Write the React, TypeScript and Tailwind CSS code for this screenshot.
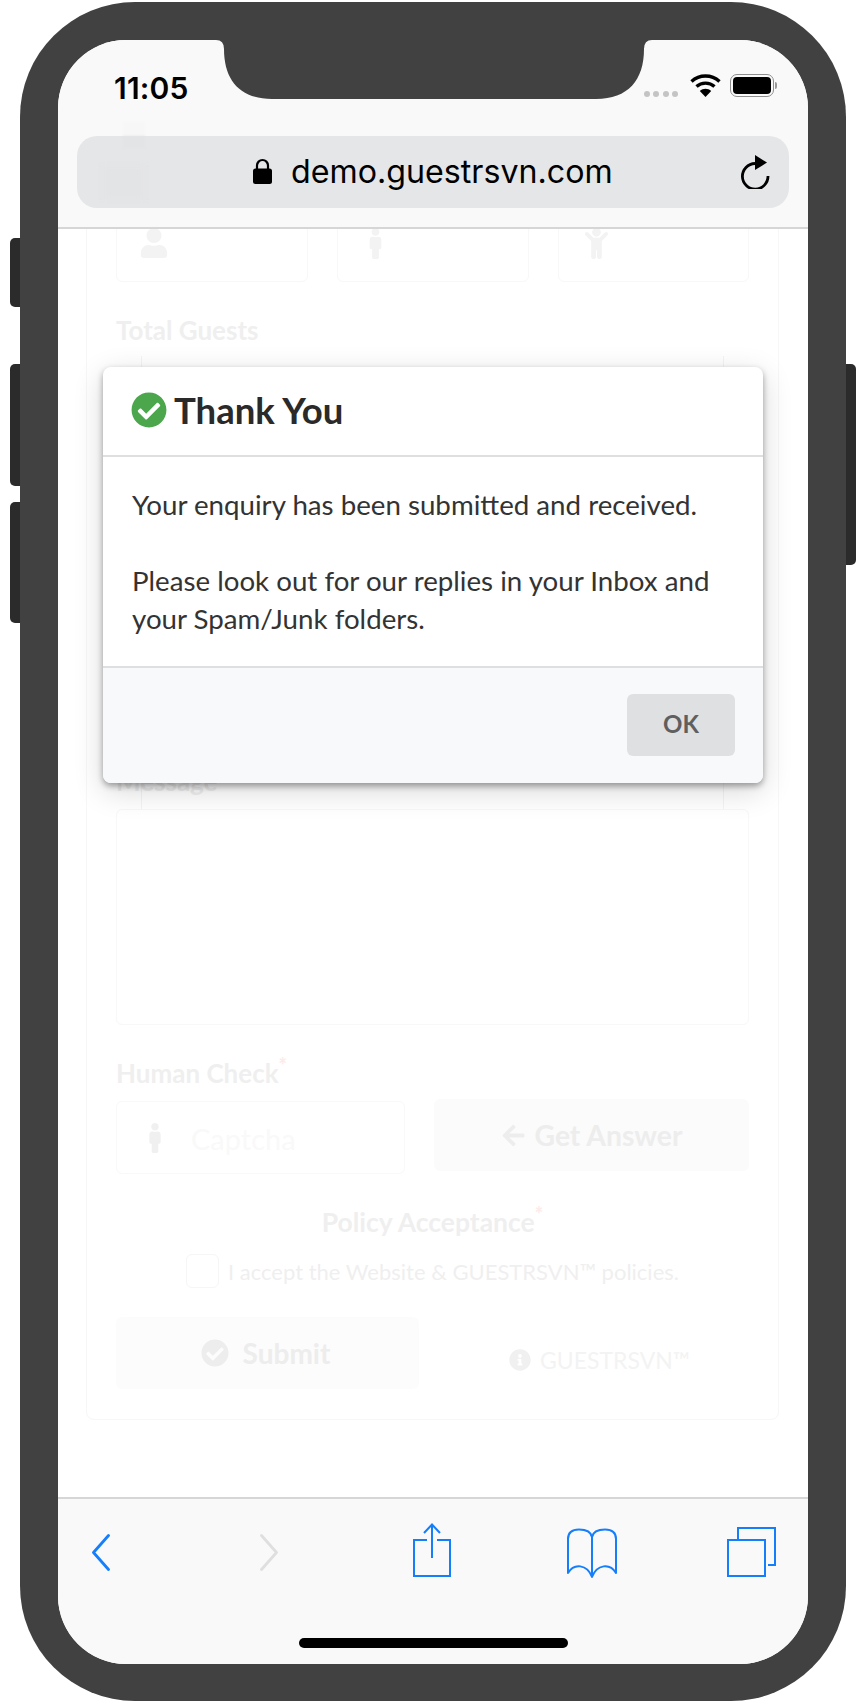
import { FaCheckCircle, FaArrowLeft, FaInfoCircle, FaMale, FaChild, FaUser } from 'react-icons/fa';

function StatusIcons() {
  return (
    <div className="mt-[1px] flex items-start">
      <div className="mt-[17px] flex gap-[3.5px]">
        <span className="h-[6px] w-[6px] rounded-full bg-[#c4c4c4]" />
        <span className="h-[6px] w-[6px] rounded-full bg-[#c4c4c4]" />
        <span className="h-[6px] w-[6px] rounded-full bg-[#c4c4c4]" />
        <span className="h-[6px] w-[6px] rounded-full bg-[#c4c4c4]" />
      </div>
      <svg className="ml-[12px]" width="31" height="23" viewBox="0 0 31 23" fill="none" stroke="#000" strokeWidth="3.4">
        <path d="M1.5 7.5C9.5 0.2 21.5 0.2 29.5 7.5" />
        <path d="M6.5 12.5C11.5 8 19.5 8 24.5 12.5" />
        <path d="M15.5 23L9.8 17C13 14 18 14 21.2 17Z" fill="#000" stroke="none" />
      </svg>
      <div className="ml-[9px] flex items-center">
        <div className="flex h-[23px] w-[44px] items-center justify-center rounded-[7px] border-[1.5px] border-[#8e8e8e] p-[2px]">
          <div className="h-full w-full rounded-[4px] bg-black" />
        </div>
        <div className="ml-[1px] h-[7px] w-[2px] rounded-r-full bg-[#9a9a9a]" />
      </div>
    </div>
  );
}

function Toolbar() {
  return (
    <div className="flex h-[167px] flex-col border-t-2 border-[#d6d6d6] bg-[#f9f9f9]">
      <div className="mt-[24px] flex pl-[34px]">
        <svg width="18" height="56" viewBox="0 0 18 56" fill="none" stroke="#157efb" strokeWidth="2.8" strokeLinecap="round" strokeLinejoin="round">
          <path d="M16.5 12.5L1.5 29.5L16.5 46.5" />
        </svg>
        <svg className="ml-[150px]" width="18" height="56" viewBox="0 0 18 56" fill="none" stroke="#dfdfdf" strokeWidth="2.8" strokeLinecap="round" strokeLinejoin="round">
          <path d="M1.5 12.5L16.5 29.5L1.5 46.5" />
        </svg>
        <svg className="ml-[135px]" width="38" height="56" viewBox="0 0 38 56" fill="none" stroke="#157efb" strokeWidth="2">
          <path d="M14 17H1V53H37V17H24" />
          <path d="M19 1.5V35" />
          <path d="M11 10L19 1.5L27 10" />
        </svg>
        <svg className="ml-[116px]" width="50" height="56" viewBox="0 0 50 56" fill="none" stroke="#157efb" strokeWidth="2" strokeLinejoin="round">
          <path d="M25 14C24 9 19 6.5 12 6.5C5 6.5 1 10 1 16V50C7 40 20 41 25 54C30 41 43 40 49 50V16C49 10 45 6.5 38 6.5C31 6.5 26 9 25 14V54" />
        </svg>
        <svg className="ml-[110px]" width="49" height="56" viewBox="0 0 49 56" fill="none" stroke="#157efb" strokeWidth="2">
          <path d="M11 16V5H48V42H41" />
          <rect x="1" y="17" width="37" height="36" />
        </svg>
      </div>
      <div className="mb-[16px] mt-auto h-[10px] w-[269px] self-center rounded-full bg-black" />
    </div>
  );
}

function GhostInput({ icon, width }: { icon?: React.ReactNode; width: string }) {
  return (
    <div className={`flex h-[71px] items-start rounded-[6px] border border-[#f8f8f8] pl-[22px] pt-[16px] ${width}`}>
      {icon}
    </div>
  );
}

function FadedForm() {
  return (
    <div className="ml-[28px] mr-[29px] -mt-[79px] rounded-[8px] border border-[#f7f7f7] px-[29px] pb-[30px] pt-[60px]">
      <div className="flex justify-between">
        <GhostInput width="w-[192px]" icon={<FaUser className="h-[30px] w-[30px] text-[#f3f3f3]" />} />
        <GhostInput width="w-[192px]" icon={<FaMale className="h-[31px] w-[31px] text-[#f3f3f3]" />} />
        <GhostInput width="w-[191px]" icon={<FaChild className="h-[31px] w-[31px] text-[#f3f3f3]" />} />
      </div>
      <p className="mt-[30px] text-[26px] font-bold leading-[36px] text-[#efefef]">Total Guests</p>
      <div className="mt-[8px] h-[453px] px-[25px]">
        <div className="h-full border-x border-[#f4f4f4]" />
      </div>
      <p className="-mt-[46px] text-[26px] font-bold leading-[36px] text-[#efefef]">Message</p>
      <div className="mt-[10px] h-[216px] rounded-[6px] border border-[#f8f8f8]" />
      <p className="mt-[30px] text-[26px] font-bold leading-[36px] text-[#efefef]">
        Human Check<span className="relative -top-[10px] text-[20px] leading-none text-[#fdeaea]">*</span>
      </p>
      <div className="mt-[8px] flex gap-[29px]">
        <div className="mt-[2px] flex h-[73px] w-[289px] items-center rounded-[6px] border border-[#f9f9f9] pl-[23px]">
          <FaMale className="h-[30px] w-[30px] text-[#f0f0f0]" />
          <span className="ml-[21px] mt-[2px] text-[29px] text-[#f9f9f9]">Captcha</span>
        </div>
        <div className="flex h-[72px] flex-1 items-center justify-center gap-[9px] rounded-[6px] bg-[#fbfbfb] text-[28.3px] font-bold text-[#ededed]">
          <FaArrowLeft className="h-[25px] w-[25px]" />
          Get Answer
        </div>
      </div>
      <p className="mt-[30px] text-center text-[26.5px] font-bold leading-[36px] text-[#efefef]">
        Policy Acceptance<span className="relative -top-[10px] text-[20px] leading-none text-[#fdeaea]">*</span>
      </p>
      <div className="mt-[14px] flex items-center justify-center gap-[9px]">
        <div className="h-[34px] w-[33px] rounded-[6px] border border-[#f6f6f6]" />
        <span className="text-[22px] text-[#efefef]">I accept the Website &amp; GUESTRSVN™ policies.</span>
      </div>
      <div className="mt-[29px] flex items-center">
        <div className="flex h-[72px] w-[303px] items-center justify-center gap-[14px] rounded-[6px] bg-[#fcfcfc] pr-[4px] text-[28px] font-bold text-[#ededed]">
          <FaCheckCircle className="h-[28px] w-[28px]" />
          Submit
        </div>
        <div className="ml-[90px] mt-[14px] flex items-center gap-[9px] text-[23px] text-[#f3f3f3]">
          <FaInfoCircle className="h-[22px] w-[22px] text-[#f0f0f0]" />
          GUESTRSVN™
        </div>
      </div>
    </div>
  );
}

function ThankYouModal() {
  return (
    <div className="absolute left-[45px] top-[327px] w-[660px] overflow-hidden rounded-[8px] bg-white shadow-[0_3px_6px_rgba(0,0,0,0.35),0_8px_30px_rgba(0,0,0,0.16)]">
      <div className="flex h-[90px] items-center gap-[7px] border-b-2 border-[#dedfe1] pb-[2px] pl-[28px] text-[36.5px] font-bold text-[#2a2a2a]">
        <FaCheckCircle className="h-[36px] w-[36px] text-[#4ca64c]" />
        Thank You
      </div>
      <div className="h-[209px] px-[29px] pt-[29px] text-[27.7px] leading-[38px] text-[#333]">
        Your enquiry has been submitted and received.
        <br />
        <br />
        Please look out for our replies in your Inbox and your Spam/Junk folders.
      </div>
      <div className="flex h-[117px] justify-end border-t-2 border-[#dedfe1] bg-[#f8f9fb] pr-[28px] pt-[26px]">
        <button className="h-[62px] w-[108px] rounded-[6px] bg-[#dfe0e2] pb-[2px] text-[24px] font-bold text-[#5f5f5f]">OK</button>
      </div>
    </div>
  );
}

export default function App() {
  return (
    <div className="relative h-[1704px] w-[866px] overflow-hidden bg-white font-['Lato',sans-serif]">
      {/* side buttons */}
      <div className="absolute left-[10px] top-[238px] h-[69px] w-[14px] rounded-l-[5px] bg-[#2b2b2b]" />
      <div className="absolute left-[10px] top-[364px] h-[122px] w-[14px] rounded-l-[5px] bg-[#2b2b2b]" />
      <div className="absolute left-[10px] top-[502px] h-[121px] w-[14px] rounded-l-[5px] bg-[#2b2b2b]" />
      <div className="absolute left-[842px] top-[364px] h-[201px] w-[14px] rounded-r-[5px] bg-[#2b2b2b]" />

      <div className="relative ml-[20px] mt-[2px] h-[1699px] w-[826px] rounded-[115px] bg-[#414141] pl-[38px] pt-[38px]">
        <div className="relative flex h-[1624px] w-[750px] flex-col overflow-hidden rounded-[68px] bg-white">
          <div className="z-10 h-[189px] shrink-0 border-b-2 border-[#d6d6d6] bg-[#f9f9f9] font-['Inter',sans-serif]">
            <div className="relative flex h-[96px] items-start justify-between pl-[56px] pr-[31px] pt-[33px]">
              <div className="absolute bottom-0 left-[65px] h-[14px] w-[22px] bg-[#f7f7f7] blur-[1px]" />
              <span className="text-[30px] font-semibold leading-[30px] tracking-[0.2px] text-black">11:05</span>
              <StatusIcons />
            </div>
            <div className="relative mx-[19px] flex h-[72px] items-center rounded-[20px] bg-[#e5e6e8]">
              <div className="absolute left-[46px] top-0 h-[12px] w-[22px] bg-[#e3e4e6] blur-[1px]" />
              <div className="absolute left-[25px] top-[29px] h-[35px] w-[43px] bg-[#e3e4e6] blur-[2px]" />
              <svg className="absolute left-[175px] top-[22px]" width="21" height="26" viewBox="0 0 21 26">
                <path d="M5 11V7.5a5.5 5.5 0 0 1 11 0V11" fill="none" stroke="#000" strokeWidth="2.2" />
                <rect x="1" y="10.5" width="19" height="15.5" rx="2.5" fill="#000" />
              </svg>
              <span className="absolute left-[214px] text-[32.2px] leading-[72px] text-black">demo.guestrsvn.com</span>
              <svg className="absolute left-[663px] top-[19px]" width="30" height="34" viewBox="0 0 30 34" fill="none">
                <path d="M15 8.5A12.8 12.8 0 1 0 28 21" stroke="#000" strokeWidth="2.8" />
                <path d="M15 0L27 7.5L15 15Z" fill="#000" />
              </svg>
            </div>
          </div>

          <div className="min-h-0 flex-1 overflow-hidden bg-white">
            <FadedForm />
          </div>

          <Toolbar />

          <ThankYouModal />

          {/* notch */}
          <svg className="absolute left-[158px] top-0 z-20" width="436" height="59" viewBox="0 0 436 59">
            <path d="M0 0Q8 0 8 9C8 40 24 59 56 59H380C412 59 428 40 428 9Q428 0 436 0Z" fill="#414141" />
          </svg>
        </div>
      </div>
    </div>
  );
}
